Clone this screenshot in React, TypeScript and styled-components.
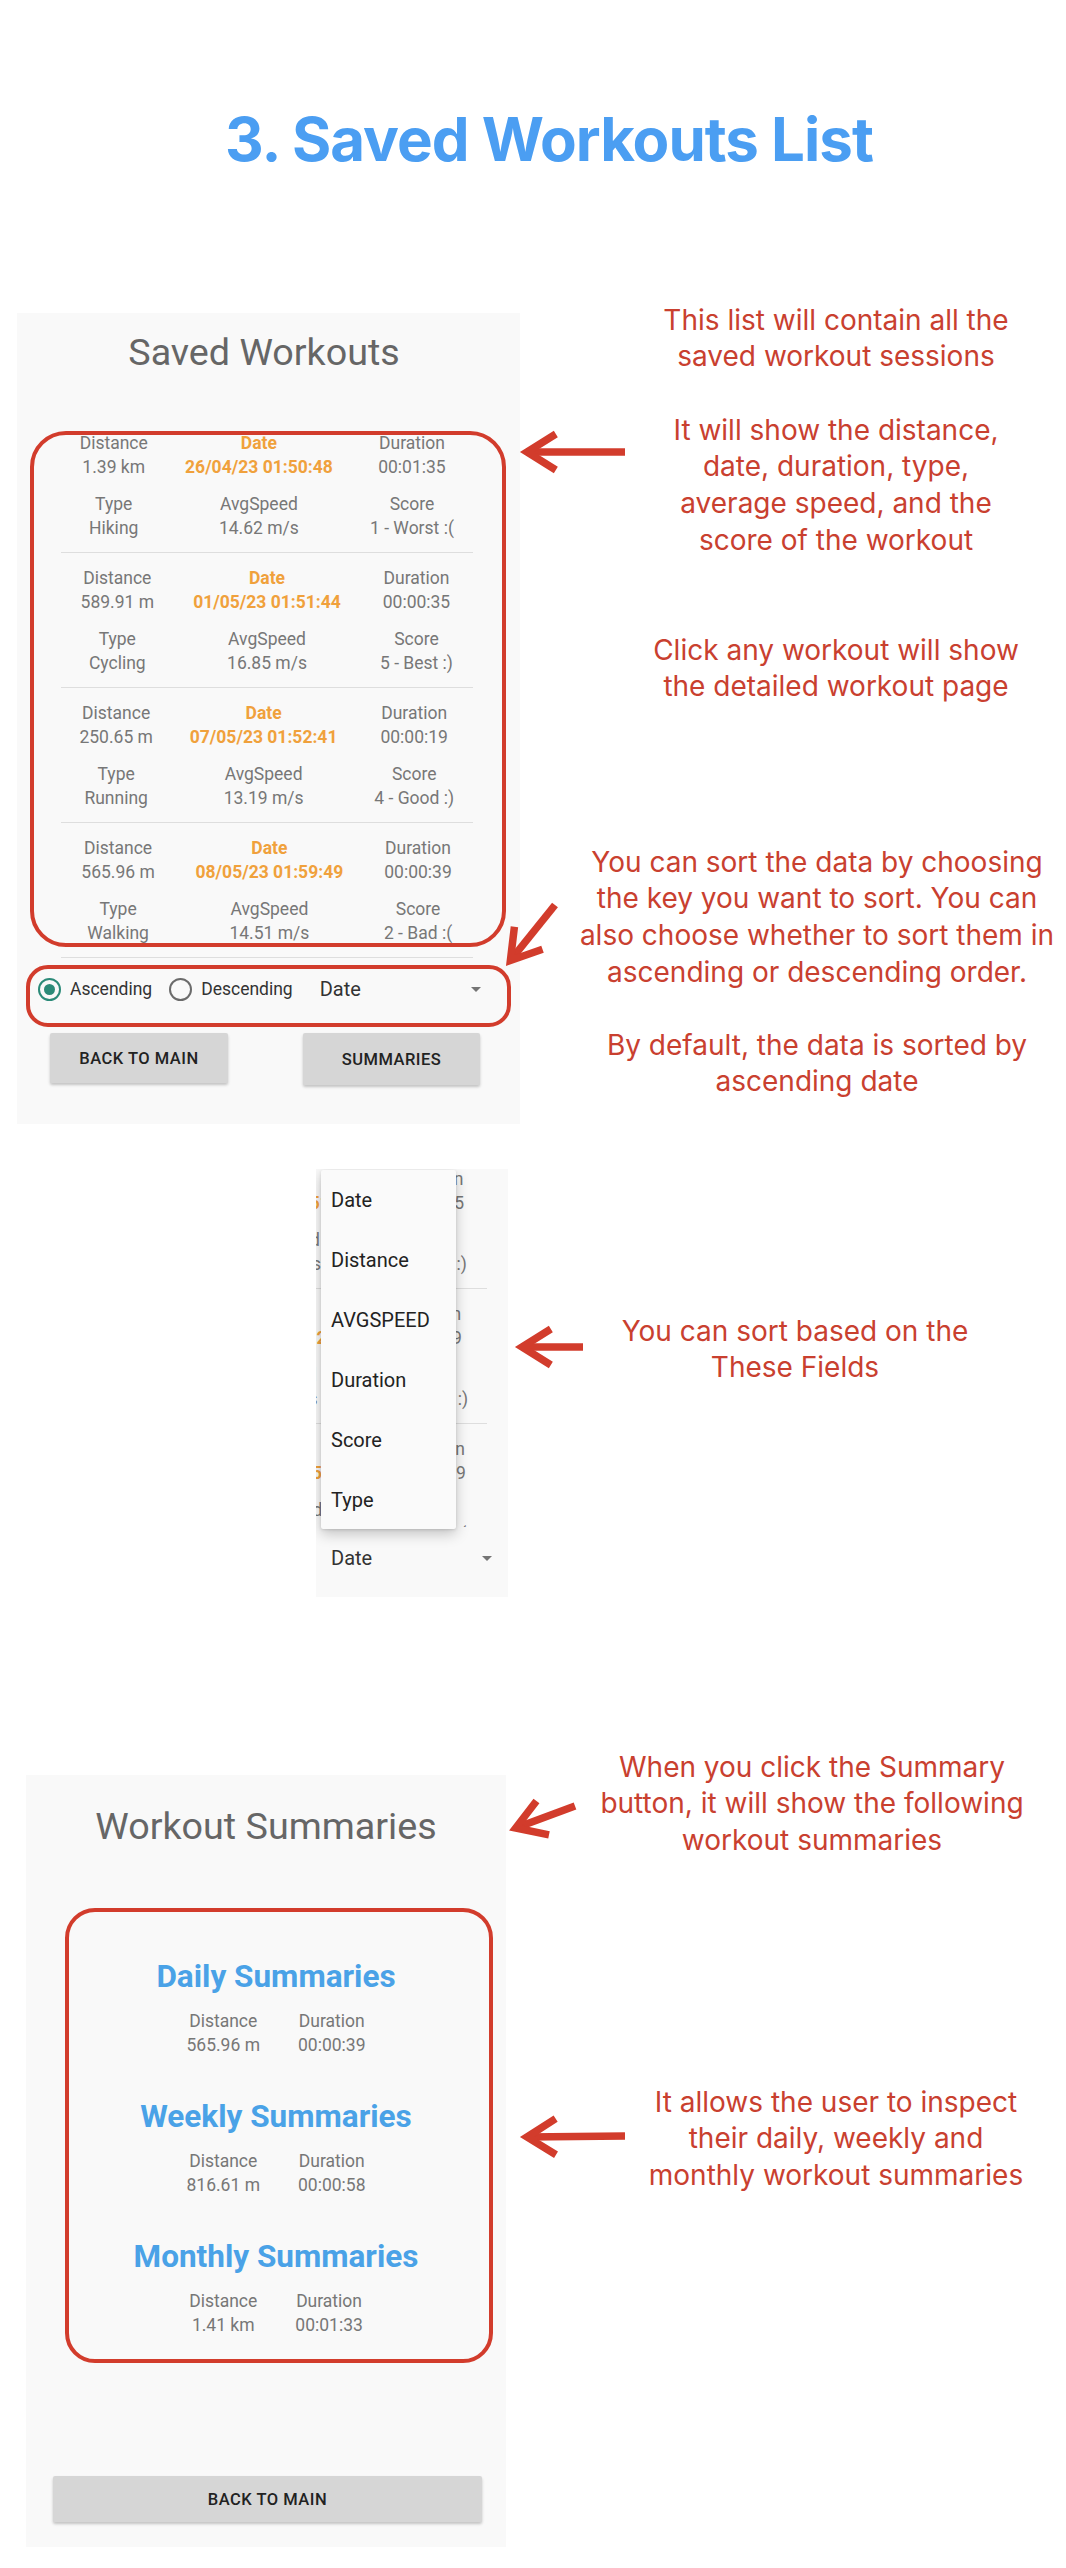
import React from "react";
import styled, { createGlobalStyle } from "styled-components";

const RED = "#d23c2c";
const NOTE_RED = "#c9402f";
const GRAY = "#777777";
const ORANGE = "#f0a13c";
const BLUE = "#4aa2e7";

const GlobalStyle = createGlobalStyle`
  *, *::before, *::after { box-sizing: border-box; }
  html, body { margin: 0; padding: 0; background: #ffffff; }
  body { font-family: Roboto, "Liberation Sans", Arial, sans-serif; -webkit-font-smoothing: antialiased; }
`;

const Page = styled.main`
  width: 1066px;
  min-height: 2568px;
  display: flex;
  flex-direction: column;
  background: #ffffff;
`;

const Header = styled.header`
  height: 300px;
  padding-top: 103px;
  padding-left: 32px;
  text-align: center;
`;

const PageTitle = styled.h1`
  margin: 0;
  font-family: Inter, "Liberation Sans", sans-serif;
  font-weight: 700;
  font-size: 60px;
  line-height: 72px;
  letter-spacing: -1px;
  color: #4b9ef2;
`;

const Section = styled.section<{ $mt: number; $h: number }>`
  position: relative;
  display: grid;
  grid-template-columns: 540px 526px;
  margin-top: ${(p) => p.$mt}px;
  height: ${(p) => p.$h}px;
`;

const PanelSlot = styled.div<{ $pl: number; $pt: number }>`
  padding-left: ${(p) => p.$pl}px;
  padding-top: ${(p) => p.$pt}px;
`;

const Notes = styled.div<{ $pt: number }>`
  display: flex;
  flex-direction: column;
  align-items: flex-start;
  padding-top: ${(p) => p.$pt}px;
`;

const Note = styled.p<{ $cx: number; $w: number; $mt?: number }>`
  margin: ${(p) => p.$mt ?? 0}px 0 0 ${(p) => p.$cx - 540 - p.$w / 2}px;
  width: ${(p) => p.$w}px;
  font-family: Inter, "Liberation Sans", sans-serif;
  font-weight: 400;
  font-size: 28px;
  line-height: 36.7px;
  color: ${NOTE_RED};
  text-align: center;
  white-space: nowrap;
`;

const Screen = styled.div<{ $w: number; $h: number }>`
  position: relative;
  width: ${(p) => p.$w}px;
  height: ${(p) => p.$h}px;
  background: #f9f9f9;
  overflow: hidden;
  display: flex;
  flex-direction: column;
`;

const ScreenTitle = styled.h2<{ $pt: number; $shift?: number }>`
  margin: 0;
  padding-top: ${(p) => p.$pt}px;
  padding-right: ${(p) => p.$shift ?? 0}px;
  font-family: Roboto, sans-serif;
  font-weight: 400;
  font-size: 37.7px;
  line-height: 43px;
  color: #666666;
  text-align: center;
`;

const List = styled.div<{ $mt: number; $ml: number }>`
  margin: ${(p) => p.$mt}px 0 0 ${(p) => p.$ml}px;
  width: 411.5px;
  flex-shrink: 0;
  display: flex;
  flex-direction: column;
`;

const Item = styled.div`
  display: flex;
  padding: 13px 0 12px;
  border-bottom: 1px solid #dedede;
`;

const Col = styled.div`
  flex: 1 1 auto;
  display: flex;
  flex-direction: column;
  align-items: center;
  text-align: center;
  white-space: nowrap;
`;

const Line = styled.span<{ $accent?: boolean; $gap?: boolean }>`
  font-size: 17.5px;
  line-height: 24px;
  color: ${(p) => (p.$accent ? ORANGE : GRAY)};
  font-weight: ${(p) => (p.$accent ? 700 : 400)};
  margin-top: ${(p) => (p.$gap ? 13 : 0)}px;
`;

const ListViewport = styled.div<{ $h: number }>`
  height: ${(p) => p.$h}px;
  overflow: hidden;
  flex-shrink: 0;
  display: flex;
  flex-direction: column;
`;

const SortRow = styled.div<{ $pl: number }>`
  display: flex;
  align-items: center;
  height: 48px;
  margin-top: 7px;
  padding-left: ${(p) => p.$pl}px;
  flex-shrink: 0;
`;

const RadioOption = styled.span<{ $ml?: number }>`
  display: flex;
  align-items: center;
  gap: 9px;
  margin-left: ${(p) => p.$ml ?? 0}px;
  font-size: 17.5px;
  line-height: 24px;
  color: #333333;
  white-space: nowrap;
`;

const Radio = styled.span<{ $on: boolean }>`
  width: 23px;
  height: 23px;
  border-radius: 50%;
  border: 2.5px solid ${(p) => (p.$on ? "#2b8a78" : "#6b6b6b")};
  display: inline-flex;
  align-items: center;
  justify-content: center;
  &::after {
    content: "";
    width: 11px;
    height: 11px;
    border-radius: 50%;
    background: #2b8a78;
    display: ${(p) => (p.$on ? "block" : "none")};
  }
`;

const Spinner = styled.div<{ $w: number; $ml: number }>`
  display: flex;
  align-items: center;
  justify-content: space-between;
  width: ${(p) => p.$w}px;
  margin-left: ${(p) => p.$ml}px;
  padding-right: 7px;
  font-size: 20px;
  line-height: 24px;
  color: #333333;
`;

const Caret = styled.span`
  width: 0;
  height: 0;
  border-left: 5px solid transparent;
  border-right: 5px solid transparent;
  border-top: 5px solid #757575;
`;

const ButtonRow = styled.div`
  display: flex;
  justify-content: space-between;
  align-items: flex-start;
  margin-top: 20px;
  padding: 0 40px 0 33px;
`;

const Btn = styled.button<{ $w: number; $h: number; $ml?: number; $mt?: number }>`
  width: ${(p) => p.$w}px;
  height: ${(p) => p.$h}px;
  margin: ${(p) => p.$mt ?? 0}px 0 0 ${(p) => p.$ml ?? 0}px;
  flex-shrink: 0;
  border: 0;
  border-radius: 2px;
  padding: 0;
  background: #d6d6d6;
  box-shadow: 0 2px 3px rgba(0, 0, 0, 0.22);
  font-family: Roboto, sans-serif;
  font-weight: 500;
  font-size: 16.5px;
  letter-spacing: 0.5px;
  color: #222222;
  text-transform: uppercase;
`;

const Callout = styled.div<{ $x: number; $y: number; $w: number; $h: number; $r: number }>`
  position: absolute;
  left: ${(p) => p.$x}px;
  top: ${(p) => p.$y}px;
  width: ${(p) => p.$w}px;
  height: ${(p) => p.$h}px;
  border: 4px solid ${RED};
  border-radius: ${(p) => p.$r}px;
  pointer-events: none;
`;

const Menu = styled.ul`
  position: absolute;
  left: 5px;
  top: 1px;
  width: 135px;
  height: 359px;
  margin: 0;
  padding: 0;
  list-style: none;
  background: #fafafa;
  box-shadow: 0 5px 14px rgba(0, 0, 0, 0.22), 0 1px 3px rgba(0, 0, 0, 0.12);
  border-radius: 2px;
`;

const MenuItem = styled.li`
  height: 60px;
  display: flex;
  align-items: center;
  padding-left: 10px;
  font-size: 20px;
  color: #222222;
`;

const SummaryBlock = styled.div`
  margin-top: 110px;
  padding-left: 20px;
  display: flex;
  flex-direction: column;
  align-items: center;
`;

const SummaryGroup = styled.div<{ $first?: boolean }>`
  margin-top: ${(p) => (p.$first ? 0 : 41)}px;
  display: flex;
  flex-direction: column;
  align-items: center;
`;

const SummaryTitle = styled.h3`
  margin: 0;
  font-family: Roboto, sans-serif;
  font-weight: 700;
  font-size: 31.5px;
  line-height: 37px;
  color: ${BLUE};
`;

const PairRow = styled.div`
  display: flex;
  gap: 38px;
  margin-top: 14px;
`;

const ArrowLayer = styled.svg`
  position: absolute;
  left: 0;
  top: 0;
  width: 1066px;
  height: 100%;
  overflow: visible;
  pointer-events: none;
`;

type Workout = {
  distance: string;
  date: string;
  duration: string;
  type: string;
  speed: string;
  score: string;
};

const WORKOUTS: Workout[] = [
  { distance: "1.39 km", date: "26/04/23 01:50:48", duration: "00:01:35", type: "Hiking", speed: "14.62 m/s", score: "1 - Worst :(" },
  { distance: "589.91 m", date: "01/05/23 01:51:44", duration: "00:00:35", type: "Cycling", speed: "16.85 m/s", score: "5 - Best :)" },
  { distance: "250.65 m", date: "07/05/23 01:52:41", duration: "00:00:19", type: "Running", speed: "13.19 m/s", score: "4 - Good :)" },
  { distance: "565.96 m", date: "08/05/23 01:59:49", duration: "00:00:39", type: "Walking", speed: "14.51 m/s", score: "2 - Bad :(" },
];

const SUMMARIES = [
  { title: "Daily Summaries", distance: "565.96 m", duration: "00:00:39" },
  { title: "Weekly Summaries", distance: "816.61 m", duration: "00:00:58" },
  { title: "Monthly Summaries", distance: "1.41 km", duration: "00:01:33" },
];

const SORT_KEYS = ["Date", "Distance", "AVGSPEED", "Duration", "Score", "Type"];

function WorkoutRow({ w }: { w: Workout }) {
  return (
    <Item>
      <Col>
        <Line>Distance</Line>
        <Line>{w.distance}</Line>
        <Line $gap>Type</Line>
        <Line>{w.type}</Line>
      </Col>
      <Col>
        <Line $accent>Date</Line>
        <Line $accent>{w.date}</Line>
        <Line $gap>AvgSpeed</Line>
        <Line>{w.speed}</Line>
      </Col>
      <Col>
        <Line>Duration</Line>
        <Line>{w.duration}</Line>
        <Line $gap>Score</Line>
        <Line>{w.score}</Line>
      </Col>
    </Item>
  );
}

function Arrow({ from, to }: { from: [number, number]; to: [number, number] }) {
  const [x1, y1] = from;
  const [x2, y2] = to;
  const ang = Math.atan2(y1 - y2, x1 - x2);
  const a = (32 * Math.PI) / 180;
  const L = 34;
  const p1 = `${x2 + L * Math.cos(ang + a)},${y2 + L * Math.sin(ang + a)}`;
  const p2 = `${x2 + L * Math.cos(ang - a)},${y2 + L * Math.sin(ang - a)}`;
  return (
    <g stroke={RED} strokeWidth={7.5} fill="none">
      <line x1={x1} y1={y1} x2={x2} y2={y2} />
      <polyline points={`${p1} ${x2},${y2} ${p2}`} strokeLinejoin="miter" strokeMiterlimit={10} />
    </g>
  );
}

function Lines({ lines }: { lines: string[] }) {
  return (
    <>
      {lines.map((l, i) => (
        <React.Fragment key={i}>
          {i > 0 && <br />}
          {l}
        </React.Fragment>
      ))}
    </>
  );
}

export default function App() {
  return (
    <>
      <GlobalStyle />
      <Page>
        <Header>
          <PageTitle>3. Saved Workouts List</PageTitle>
        </Header>

        <Section $mt={0} $h={824}>
          <PanelSlot $pl={17} $pt={13}>
            <Screen $w={503} $h={811}>
              <ScreenTitle $pt={18} $shift={9}>
                Saved Workouts
              </ScreenTitle>
              <List $mt={44} $ml={44}>
                {WORKOUTS.map((w) => (
                  <WorkoutRow key={w.date} w={w} />
                ))}
              </List>
              <SortRow $pl={21}>
                <RadioOption>
                  <Radio $on />
                  Ascending
                </RadioOption>
                <RadioOption $ml={17}>
                  <Radio $on={false} />
                  Descending
                </RadioOption>
                <Spinner $w={168} $ml={27}>
                  Date
                  <Caret />
                </Spinner>
              </SortRow>
              <ButtonRow>
                <Btn $w={178} $h={50}>Back to main</Btn>
                <Btn $w={177} $h={52}>Summaries</Btn>
              </ButtonRow>
              <Callout $x={13} $y={118} $w={476} $h={516} $r={36} />
              <Callout $x={9} $y={652} $w={485} $h={62} $r={22} />
            </Screen>
          </PanelSlot>
          <Notes $pt={1.7}>
            <Note $cx={836} $w={420}>
              <Lines lines={["This list will contain all the", "saved workout sessions"]} />
            </Note>
            <Note $cx={836} $w={420} $mt={36.6}>
              <Lines lines={["It will show the distance,", "date, duration, type,", "average speed, and the", "score of the workout"]} />
            </Note>
            <Note $cx={836} $w={420} $mt={73.2}>
              <Lines lines={["Click any workout will show", "the detailed workout page"]} />
            </Note>
            <Note $cx={817} $w={490} $mt={138.6}>
              <Lines
                lines={[
                  "You can sort the data by choosing",
                  "the key you want to sort. You can",
                  "also choose whether to sort them in",
                  "ascending or descending order.",
                ]}
              />
            </Note>
            <Note $cx={817} $w={490} $mt={36.2}>
              <Lines lines={["By default, the data is sorted by", "ascending date"]} />
            </Note>
          </Notes>
          <ArrowLayer>
            <Arrow from={[625, 152]} to={[527, 152]} />
            <Arrow from={[555, 605]} to={[510.4, 660.5]} />
          </ArrowLayer>
        </Section>

        <Section $mt={45} $h={428}>
          <PanelSlot $pl={316} $pt={0}>
            <Screen $w={192} $h={428}>
              <ListViewport $h={358}>
                <List $mt={-150} $ml={-241}>
                  {WORKOUTS.map((w) => (
                    <WorkoutRow key={w.date} w={w} />
                  ))}
                </List>
              </ListViewport>
              <SortRow $pl={15}>
                <Spinner $w={168} $ml={0}>
                  Date
                  <Caret />
                </Spinner>
              </SortRow>
              <Menu>
                {SORT_KEYS.map((k) => (
                  <MenuItem key={k}>{k}</MenuItem>
                ))}
              </Menu>
            </Screen>
          </PanelSlot>
          <Notes $pt={143.7}>
            <Note $cx={795} $w={420}>
              <Lines lines={["You can sort based on the", "These Fields"]} />
            </Note>
          </Notes>
          <ArrowLayer>
            <Arrow from={[583, 178]} to={[522, 178]} />
          </ArrowLayer>
        </Section>

        <Section $mt={151} $h={799}>
          <PanelSlot $pl={26} $pt={27}>
            <Screen $w={480} $h={772}>
              <ScreenTitle $pt={30}>Workout Summaries</ScreenTitle>
              <SummaryBlock>
                {SUMMARIES.map((s, i) => (
                  <SummaryGroup key={s.title} $first={i === 0}>
                    <SummaryTitle>{s.title}</SummaryTitle>
                    <PairRow>
                      <Col>
                        <Line>Distance</Line>
                        <Line>{s.distance}</Line>
                      </Col>
                      <Col>
                        <Line>Duration</Line>
                        <Line>{s.duration}</Line>
                      </Col>
                    </PairRow>
                  </SummaryGroup>
                ))}
              </SummaryBlock>
              <Btn $w={429} $h={46} $ml={27} $mt={139}>
                Back to main
              </Btn>
              <Callout $x={39} $y={133} $w={428} $h={455} $r={30} />
            </Screen>
          </PanelSlot>
          <Notes $pt={0.7}>
            <Note $cx={812} $w={450}>
              <Lines lines={["When you click the Summary", "button, it will show the following", "workout summaries"]} />
            </Note>
            <Note $cx={836} $w={420} $mt={224.9}>
              <Lines lines={["It allows the user to inspect", "their daily, weekly and", "monthly workout summaries"]} />
            </Note>
          </Notes>
          <ArrowLayer>
            <Arrow from={[575, 58]} to={[515.7, 80]} />
            <Arrow from={[625, 388]} to={[527, 389]} />
          </ArrowLayer>
        </Section>
      </Page>
    </>
  );
}
